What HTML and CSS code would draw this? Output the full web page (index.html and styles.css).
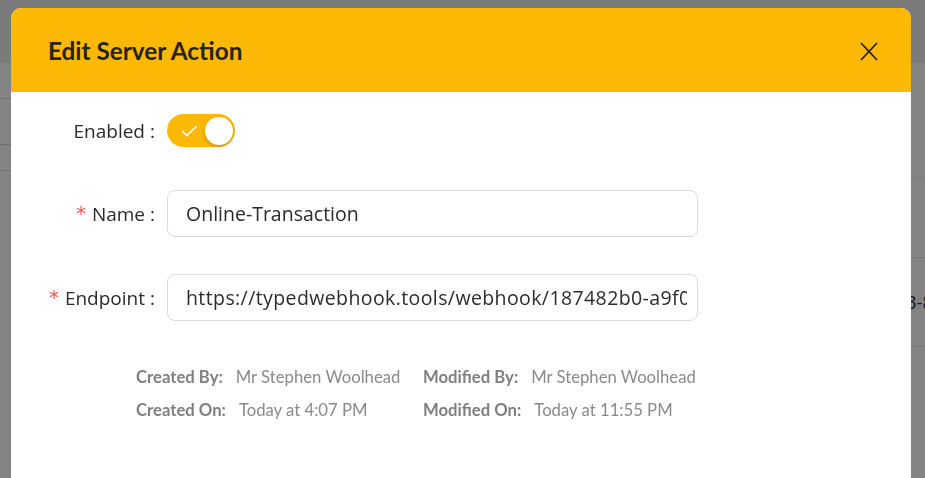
FILE: index.html
```html
<!DOCTYPE html>
<html>
<head>
<meta charset="utf-8">
<link rel="stylesheet" href="styles.css">
</head>
<body>
<div class="bg">
  <div class="bg-top"></div>
  <div class="bg-main">
    <div class="bg-side">
      <div class="bg-row r1"></div>
      <div class="bg-row r2"></div>
      <div class="bg-row r3"></div>
    </div>
    <div class="bg-content">
      <div class="bg-row c1"></div>
      <div class="bg-row c2"></div>
      <div class="bg-row c3"><span class="bg-text">2ab3-8a1</span></div>
    </div>
  </div>
</div>

<div class="overlay">
  <div class="modal">
    <div class="modal-header">
      <h1 class="modal-title">Edit Server Action</h1>
      <button class="close" aria-label="Close">
        <svg width="18" height="19" viewBox="0 0 18 19"><path d="M1 1 L17 18 M17 1 L1 18" stroke="#222" stroke-width="1.8" fill="none"/></svg>
      </button>
    </div>
    <div class="modal-body">
      <div class="form-row">
        <label class="form-label">Enabled<span class="colon">:</span></label>
        <div class="form-control">
          <span class="switch">
            <svg class="check" width="17" height="12" viewBox="0 0 17 12"><path d="M1.2 6 L5.8 10.6 L15.5 1.2" stroke="#fff" stroke-width="1.5" fill="none"/></svg>
            <span class="knob"></span>
          </span>
        </div>
      </div>
      <div class="form-row">
        <label class="form-label"><span class="req">*</span>Name<span class="colon">:</span></label>
        <div class="form-control">
          <input class="input" type="text" value="Online-Transaction">
        </div>
      </div>
      <div class="form-row row-endpoint">
        <label class="form-label"><span class="req">*</span>Endpoint<span class="colon">:</span></label>
        <div class="form-control">
          <input class="input input-url" type="text" value="https://typedwebhook.tools/webhook/187482b0-a9f0-4c1e-9b2a-8f3e">
        </div>
      </div>
      <div class="meta">
        <div class="meta-col">
          <div class="meta-item"><span class="meta-label">Created By:</span><span class="meta-value">Mr Stephen Woolhead</span></div>
          <div class="meta-item"><span class="meta-label">Created On:</span><span class="meta-value">Today at 4:07 PM</span></div>
        </div>
        <div class="meta-col">
          <div class="meta-item"><span class="meta-label">Modified By:</span><span class="meta-value">Mr Stephen Woolhead</span></div>
          <div class="meta-item"><span class="meta-label">Modified On:</span><span class="meta-value">Today at 11:55 PM</span></div>
        </div>
      </div>
    </div>
  </div>
</div>
</body>
</html>
```
FILE: styles.css
```css
* { box-sizing: border-box; }
html, body { margin: 0; padding: 0; }
body {
  width: 925px;
  height: 478px;
  overflow: hidden;
  background: #838383;
  font-family: "Open Sans", "Noto Sans", sans-serif;
}

/* background page (dimmed) */
.bg { width: 925px; height: 478px; }
.bg-top { height: 62px; background: #7b7b7b; border-bottom: 1px solid #767676; }
.bg-main { display: flex; }
.bg-side { width: 200px; }
.bg-content { flex: 1; }
.bg-row { border-bottom: 1px solid #6f6f6f; }
.r1 { height: 37px; }
.r2 { height: 46px; }
.r3 { height: 26px; }
.c1 { height: 116px; border-bottom-color: #7a7a7a; }
.c2 { height: 80px; border-bottom-color: #767676; }
.c3 { height: 89px; display: flex; align-items: center; justify-content: flex-end; border-bottom-color: #767676; }
.bg-text { font-family: "Open Sans", sans-serif; font-size: 18px; color: #14142a; margin-right: -28px; }

/* modal */
.overlay {
  position: fixed;
  inset: 0;
  padding: 8px 0 0 11px;
}
.modal {
  width: 900px;
  height: 600px;
  background: #fff;
  border-radius: 10px 10px 0 0;
  overflow: hidden;
}
.modal-header {
  height: 84px;
  background: #fbb905;
  display: flex;
  align-items: center;
  justify-content: space-between;
  padding: 0 33px 0 37px;
}
.modal-title {
  margin: 0;
  font-family: "Lato", sans-serif;
  font-weight: 700;
  font-size: 24.3px;
  color: #2a2312;
}
.close {
  border: 0;
  background: none;
  padding: 0;
  width: 18px;
  height: 19px;
  display: block;
  margin-top: 2px;
}
.close svg { display: block; }

.modal-body {
  padding-top: 15px;
  display: flex;
  flex-direction: column;
}
.form-row {
  display: flex;
  align-items: center;
  height: 47px;
  margin-bottom: 36px;
}
.row-endpoint { margin-top: 1px; }
.form-label {
  width: 156px;
  flex: none;
  text-align: right;
  font-size: 19px;
  color: #2b2b2b;
  padding-right: 12px;
  white-space: nowrap;
}
.colon { margin-left: 5px; }
.req {
  color: #ff4d4f;
  font-size: 20px;
  margin-right: 6px;
  font-family: "DejaVu Sans", sans-serif;
  position: relative;
  top: -1px;
}
.form-control { display: flex; align-items: center; }

.switch {
  width: 68px;
  height: 33px;
  border-radius: 17px;
  background: #fbb905;
  display: flex;
  align-items: center;
  justify-content: space-between;
  padding: 0 2px 0 14px;
}
.check { display: block; margin-top: 1px; }
.knob {
  width: 28px;
  height: 28px;
  border-radius: 50%;
  background: #fff;
  box-shadow: 0 2px 4px rgba(0, 0, 0, 0.2);
}

.input {
  width: 531px;
  height: 47px;
  border: 1px solid #d9d9d9;
  border-radius: 8px;
  padding: 0 10px 0 18px;
  font-family: "Open Sans", "Noto Sans", sans-serif;
  font-size: 19.5px;
  color: #2b2b2b;
  outline: none;
  background: #fff;
}
.input-url { letter-spacing: 0.4px; }

.meta {
  display: flex;
  padding-left: 125px;
  margin-top: 3px;
  font-family: "Lato", sans-serif;
  font-size: 16.7px;
}
.meta-col { width: 287px; }
.meta-item { height: 33px; display: flex; align-items: center; }
.meta-label { font-weight: 700; color: #7f7f7f; margin-right: 13px; }
.meta-value { color: #8a8a8a; }
```
